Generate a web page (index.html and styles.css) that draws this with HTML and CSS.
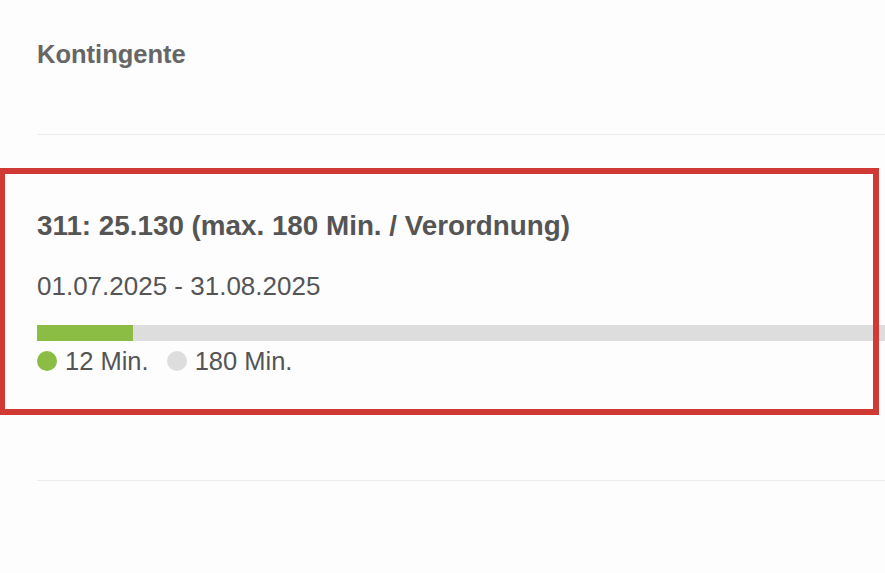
FILE: index.html
```html
<!DOCTYPE html>
<html lang="de">
<head>
<meta charset="utf-8">
<title>Kontingente</title>
<link rel="stylesheet" href="styles.css">
</head>
<body>
<main class="page">
  <header class="section-head">
    <h1 class="section-title">Kontingente</h1>
  </header>
  <section class="quota">
    <h2 class="quota-title">311: 25.130 (max. 180 Min. / Verordnung)</h2>
    <p class="quota-dates">01.07.2025 - 31.08.2025</p>
    <div class="bar"><div class="bar-fill" style="width: 6.667%"></div></div>
    <div class="legend">
      <span class="legend-item"><span class="dot dot-used"></span>12 Min.</span>
      <span class="legend-item"><span class="dot dot-total"></span>180 Min.</span>
    </div>
  </section>
  <div class="highlight"></div>
</main>
</body>
</html>
```
FILE: styles.css
```css
html, body {
  margin: 0;
  padding: 0;
  background: #fdfdfd;
  overflow: hidden;
}
body {
  font-family: "Liberation Sans", Arial, sans-serif;
  color: #555;
}
.page {
  position: relative;
  width: 1440px;
  padding-left: 37px;
  height: 573px;
}
.section-head {
  padding: 39px 0 65px;
  border-bottom: 1px solid #ececec;
}
.section-title {
  margin: 0;
  font-size: 25.5px;
  line-height: 30px;
  font-weight: bold;
  color: #666;
}
.quota {
  padding: 75px 0 108px;
  border-bottom: 1px solid #ececec;
}
.quota-title {
  margin: 0;
  font-size: 27.8px;
  line-height: 32px;
  font-weight: bold;
  color: #555;
}
.quota-dates {
  margin: 29px 0 0;
  font-size: 26px;
  line-height: 30px;
  color: #555;
}
.bar {
  margin-top: 24px;
  height: 16px;
  background: #dddddd;
}
.bar-fill {
  height: 100%;
  background: #8bbd45;
}
.legend {
  margin-top: 9px;
  display: flex;
  align-items: center;
  gap: 18px;
  height: 22px;
}
.legend-item {
  display: flex;
  align-items: center;
  gap: 8px;
  font-size: 25.5px;
  line-height: 22px;
}
.dot {
  width: 20px;
  height: 20px;
  border-radius: 50%;
  display: inline-block;
}
.dot-used { background: #8bbd45; }
.dot-total { background: #dddddd; }
.highlight {
  position: absolute;
  left: -1px;
  top: 168px;
  width: 868px;
  height: 235px;
  border: 6px solid #d13a34;
  pointer-events: none;
}
```
